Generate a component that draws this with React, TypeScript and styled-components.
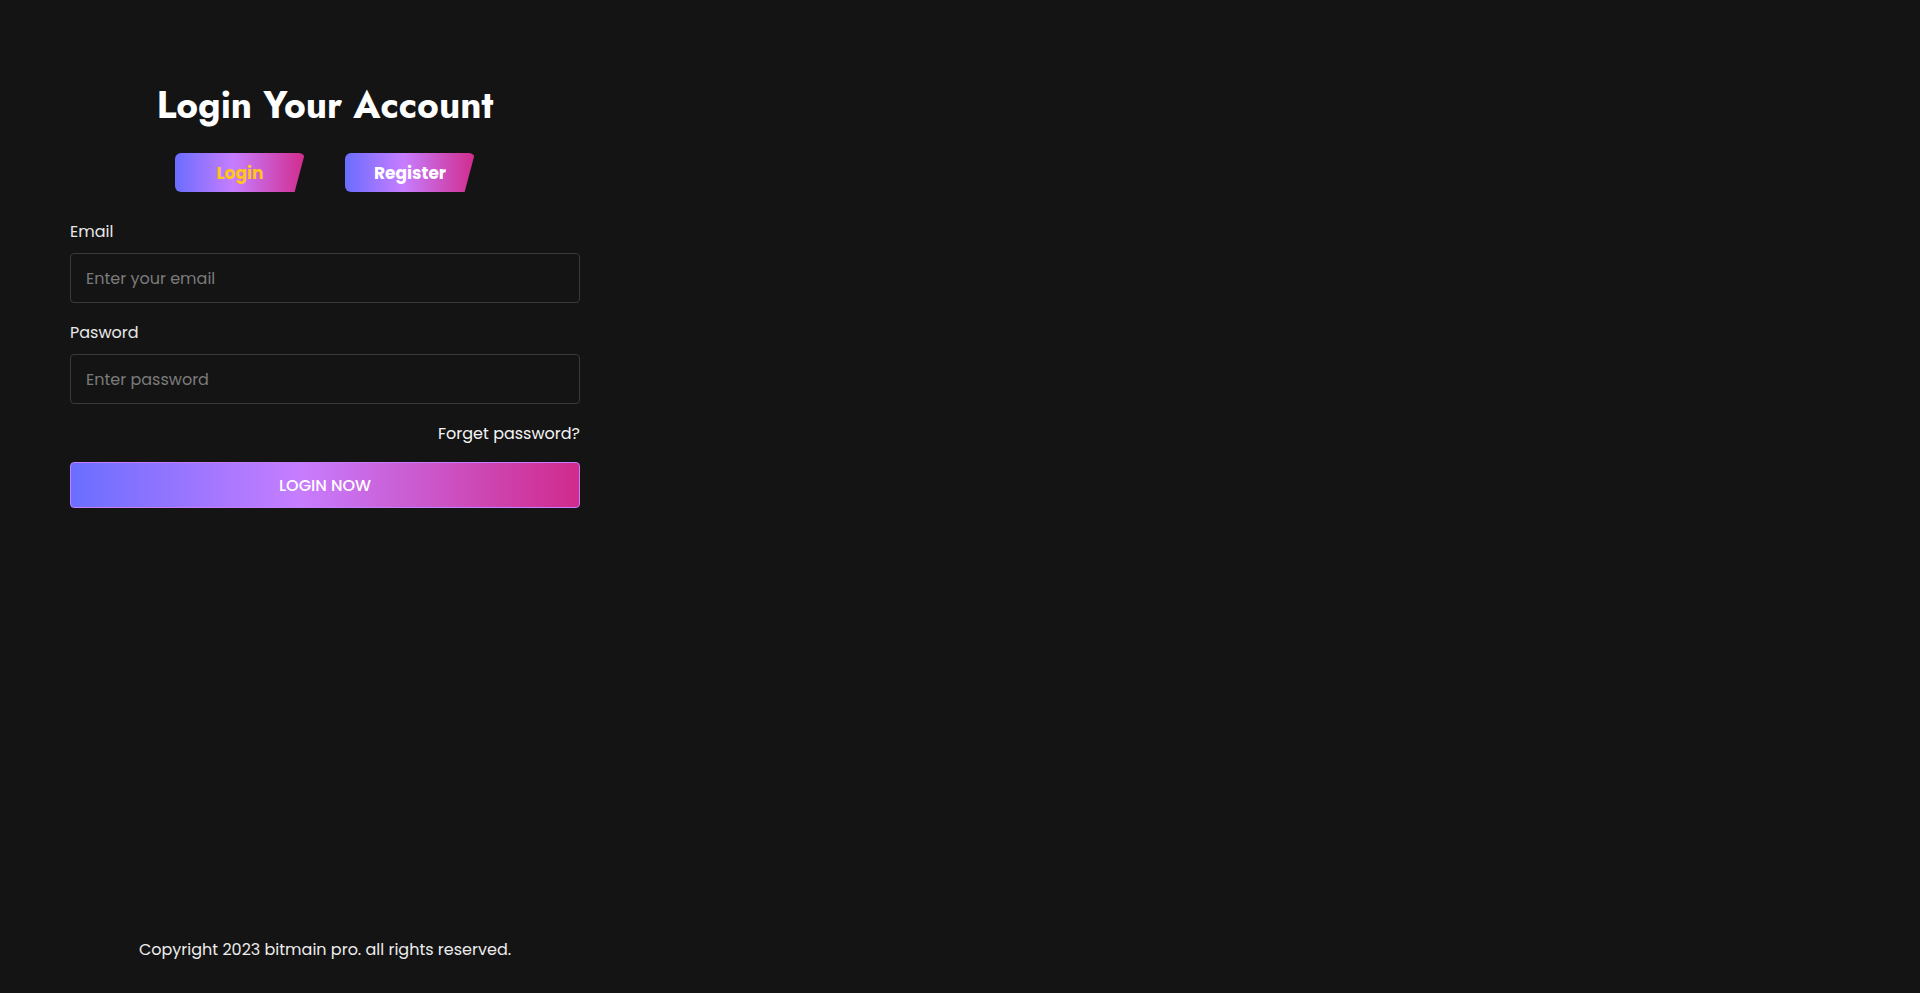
import React from 'react';
import styled, { createGlobalStyle } from 'styled-components';

const GlobalStyle = createGlobalStyle`
	* {
		box-sizing: border-box;
	}
	html,
	body {
		margin: 0;
		padding: 0;
		background: #141414;
		color: #f2f2f2;
		font-family: 'Poppins', 'Open Sans', sans-serif;
	}
`;

const Page = styled.div`
	min-height: 993px;
	display: flex;
`;

const LeftPanel = styled.section`
	width: 650px;
	min-height: 993px;
	padding: 0 70px;
	display: flex;
	flex-direction: column;
`;

const FormArea = styled.div`
	flex: 1;
	padding-top: 83px;
	display: flex;
	flex-direction: column;
`;

const Title = styled.h1`
	margin: 0;
	text-align: center;
	font-family: 'Jost', 'Lato', sans-serif;
	font-weight: 700;
	font-size: 37px;
	line-height: 44px;
	color: #ffffff;
`;

const Tabs = styled.div`
	margin-top: 26px;
	display: flex;
	justify-content: center;
	gap: 40px;
`;

const Tab = styled.button<{ $active?: boolean }>`
	width: 130px;
	height: 39px;
	border: none;
	padding: 0;
	border-radius: 6px;
	cursor: pointer;
	background: linear-gradient(90deg, #6a6dff 0%, #c77dff 45%, #d12c8c 100%);
	clip-path: polygon(0 0, 100% 0, 92% 100%, 0 100%);
	font-family: 'Poppins', 'Open Sans', sans-serif;
	font-weight: 700;
	font-size: 17px;
	color: ${(p) => (p.$active ? '#ffc61a' : '#ffffff')};
`;

const Field = styled.div`
	margin-top: 28px;
	display: flex;
	flex-direction: column;
	& + & {
		margin-top: 18px;
	}
`;

const Label = styled.label`
	font-size: 16px;
	line-height: 24px;
	color: #e8e8e8;
	margin-bottom: 9px;
`;

const Input = styled.input`
	width: 100%;
	height: 50px;
	padding: 0 15px;
	background: #141414;
	border: 1px solid #3a3a3a;
	border-radius: 4px;
	font-family: 'Poppins', 'Open Sans', sans-serif;
	font-size: 16px;
	color: #f2f2f2;
	outline: none;
	&::placeholder {
		color: #7b7b7b;
	}
`;

const ForgetRow = styled.div`
	margin-top: 18px;
	display: flex;
	justify-content: flex-end;
`;

const ForgetLink = styled.a`
	font-size: 16px;
	line-height: 24px;
	color: #f4f4f4;
	text-decoration: none;
	cursor: pointer;
`;

const SubmitButton = styled.button`
	margin-top: 16px;
	width: 100%;
	height: 46px;
	border: 1px solid #c77dff;
	border-radius: 4px;
	cursor: pointer;
	background: linear-gradient(90deg, #6a6eff 0%, #c77dff 45%, #d02a8c 100%);
	font-family: 'Poppins', 'Open Sans', sans-serif;
	font-weight: 500;
	font-size: 16px;
	color: #ffffff;
	text-transform: uppercase;
`;

const Footer = styled.footer`
	padding-bottom: 31px;
	text-align: center;
	font-size: 16px;
	line-height: 24px;
	color: #ececec;
`;

export default function App() {
	return (
		<>
			<GlobalStyle />
			<Page>
				<LeftPanel>
					<FormArea>
						<Title>Login Your Account</Title>
						<Tabs>
							<Tab $active>Login</Tab>
							<Tab>Register</Tab>
						</Tabs>
						<Field>
							<Label htmlFor='email'>Email</Label>
							<Input id='email' type='email' placeholder='Enter your email' />
						</Field>
						<Field>
							<Label htmlFor='password'>Pasword</Label>
							<Input id='password' type='password' placeholder='Enter password' />
						</Field>
						<ForgetRow>
							<ForgetLink>Forget password?</ForgetLink>
						</ForgetRow>
						<SubmitButton>Login Now</SubmitButton>
					</FormArea>
					<Footer>Copyright 2023 bitmain pro. all rights reserved.</Footer>
				</LeftPanel>
			</Page>
		</>
	);
}
